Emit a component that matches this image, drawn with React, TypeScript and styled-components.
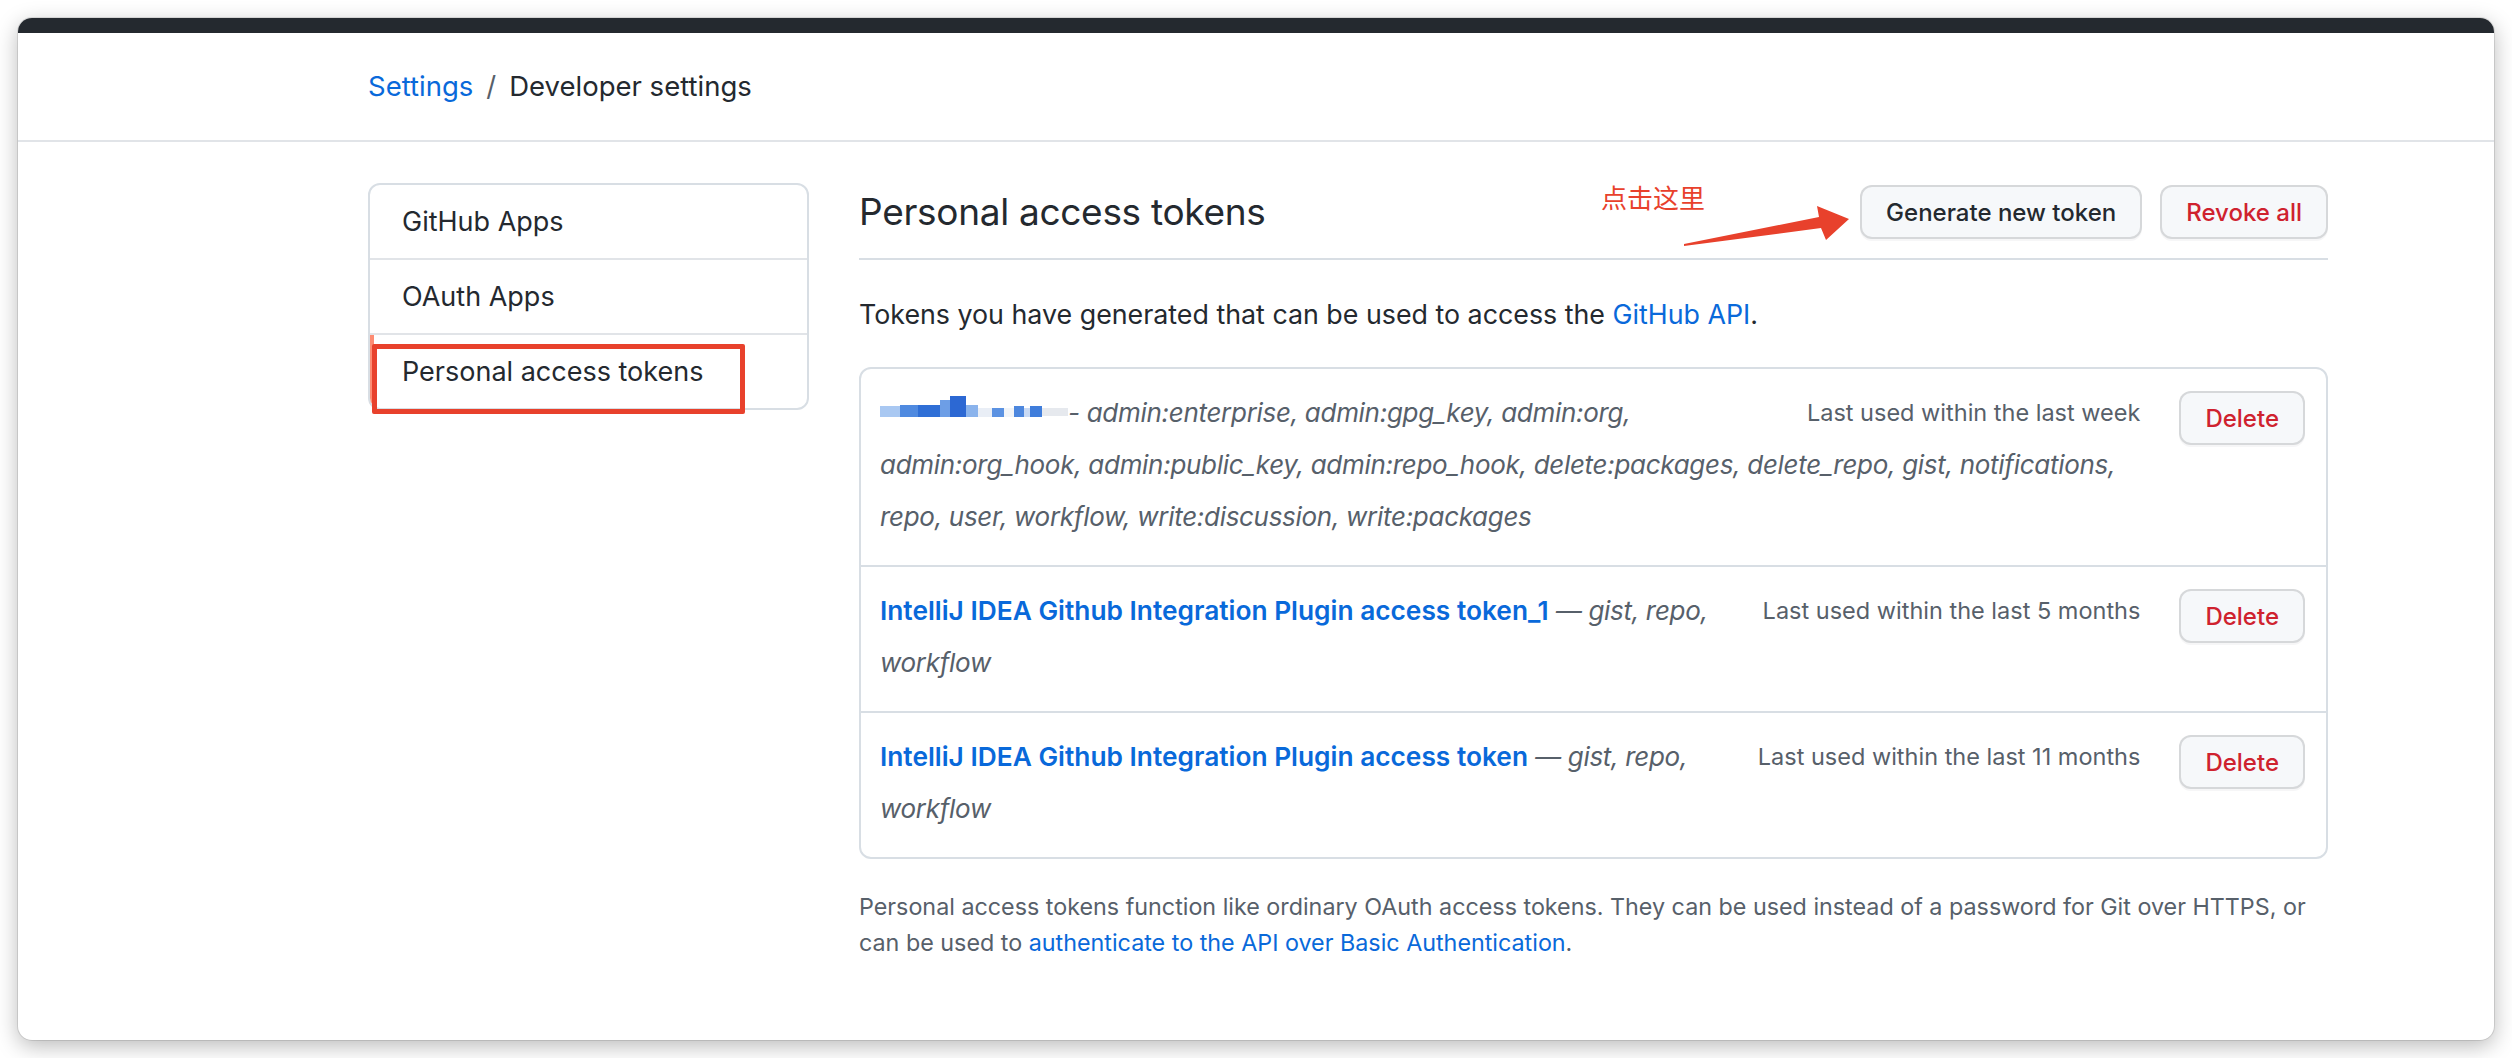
import React from 'react';
import styled, {createGlobalStyle, css} from 'styled-components';

const GlobalStyle = createGlobalStyle`
  html, body {
    margin: 0;
    padding: 0;
    background: #ffffff;
  }
  body {
    font-family: Inter, 'Noto Sans', 'Noto Sans CJK SC', sans-serif;
    color: #24292f;
    -webkit-font-smoothing: antialiased;
  }
  #root {
    width: 2512px;
    height: 1058px;
    overflow: hidden;
  }
`;

const Page = styled.div`
  box-sizing: border-box;
  width: 2512px;
  height: 1058px;
  padding: 18px;
`;

const Window = styled.div`
  position: relative;
  width: 2476px;
  height: 1022px;
  background: #ffffff;
  border-radius: 14px;
  overflow: hidden;
  box-shadow: 0 0 0 1px rgba(0, 0, 0, 0.1), 0 6px 22px rgba(0, 0, 0, 0.28);
`;

const TopBar = styled.div`
  height: 15px;
  background: #24292f;
`;

const PageHeader = styled.header`
  display: flex;
  align-items: center;
  height: 107px;
  padding-left: 350px;
  border-bottom: 2px solid #e1e4e8;
`;

const Breadcrumb = styled.nav`
  font-size: 27.5px;
  line-height: 1;
  color: #24292f;
`;

const Crumb = styled.a`
  color: #0969da;
  text-decoration: none;
`;

const Slash = styled.span`
  margin: 0 13px;
  color: #57606a;
`;

const Layout = styled.div`
  display: flex;
  gap: 50px;
  padding: 41px 0 0 350px;
`;

const SideMenu = styled.nav`
  box-sizing: border-box;
  width: 441px;
  align-self: flex-start;
  border: 2px solid #d8dee4;
  border-radius: 12px;
  overflow: hidden;
`;

const MenuItem = styled.a<{$active?: boolean}>`
  display: flex;
  align-items: center;
  height: 73px;
  padding-left: 32px;
  font-size: 27px;
  color: #24292f;
  text-decoration: none;
  & + & {
    border-top: 2px solid #e1e4e8;
  }
  ${(p) =>
    p.$active &&
    css`
      box-shadow: inset 4px 0 0 #fd8c73;
    `}
`;

const Main = styled.main`
  width: 1469px;
`;

const Subhead = styled.div`
  display: flex;
  align-items: center;
  padding: 2px 0 19px;
  border-bottom: 2px solid #d8dee4;
`;

const Title = styled.h2`
  flex: 1;
  margin: 0;
  font-size: 37px;
  font-weight: 400;
  line-height: 54px;
  letter-spacing: -0.3px;
`;

const Button = styled.button<{$danger?: boolean}>`
  box-sizing: border-box;
  height: 54px;
  padding: 0 24px;
  font-family: inherit;
  font-size: 24px;
  font-weight: 500;
  color: ${(p) => (p.$danger ? '#cf222e' : '#24292f')};
  background: #f6f8fa;
  border: 2px solid rgba(31, 35, 40, 0.15);
  border-radius: 12px;
  box-shadow: 0 2px 0 rgba(31, 35, 40, 0.04);
  & + & {
    margin-left: 18px;
  }
`;

const Intro = styled.p`
  margin: 33px 0 32px;
  font-size: 26.8px;
  line-height: 42px;
`;

const Link = styled.a`
  color: #0969da;
  text-decoration: none;
`;

const TokenBox = styled.div`
  border: 2px solid #d8dee4;
  border-radius: 12px;
`;

const TokenRow = styled.div`
  display: flow-root;
  padding: 18px 21px 22px 19px;
  font-size: 26px;
  line-height: 52px;
  & + & {
    border-top: 2px solid #d8dee4;
  }
`;

const DeleteButton = styled(Button)`
  float: right;
  margin-top: 4px;
`;

const LastUsed = styled.span`
  float: right;
  margin-right: 39px;
  font-size: 23.5px;
  line-height: 52px;
  color: #57606a;
`;

const TokenName = styled.a`
  font-size: 26.3px;
  font-weight: 600;
  color: #0969da;
  text-decoration: none;
`;

const Scopes = styled.span`
  font-style: italic;
  letter-spacing: -0.3px;
  color: #57606a;
`;

const Mosaic = styled.svg`
  vertical-align: 4px;
`;

const Note = styled.p`
  margin: 30px 0 0;
  font-size: 23.3px;
  line-height: 36px;
  color: #57606a;
  white-space: nowrap;
`;

const Highlight = styled.div`
  position: absolute;
  left: 354px;
  top: 326px;
  width: 373px;
  height: 70px;
  box-sizing: border-box;
  border: 5px solid #e8412c;
  border-radius: 2px;
`;

const AnnotationLabel = styled.span`
  position: absolute;
  left: 1583px;
  top: 166px;
  font-family: 'Noto Sans CJK SC', sans-serif;
  font-size: 26px;
  line-height: 1;
  color: #e8412c;
`;

const ArrowLayer = styled.svg`
  position: absolute;
  left: 0;
  top: 0;
  pointer-events: none;
`;

const mosaicBlocks: [number, number, number, number, string][] = [
  [0, 10, 20, 11, '#a9c8f2'],
  [20, 9, 18, 12, '#4f8ae0'],
  [38, 9, 22, 12, '#2f6fd6'],
  [60, 4, 10, 17, '#6d9ee6'],
  [70, 0, 16, 21, '#2c68d3'],
  [86, 9, 12, 12, '#8ab3ec'],
  [98, 12, 14, 9, '#e9eef6'],
  [112, 12, 12, 9, '#5b92e2'],
  [124, 12, 10, 9, '#f1f4f8'],
  [134, 10, 10, 11, '#4d87de'],
  [144, 12, 6, 9, '#c9daf4'],
  [150, 10, 12, 11, '#3f7ddb'],
  [162, 12, 26, 8, '#e6e9ee'],
];

const tokens = [
  {
    name: 'IntelliJ IDEA Github Integration Plugin access token_1',
    lastUsed: 'Last used within the last 5 months',
  },
  {
    name: 'IntelliJ IDEA Github Integration Plugin access token',
    lastUsed: 'Last used within the last 11 months',
  },
];

const App: React.FC = () => {
  return (
    <>
      <GlobalStyle />
      <Page>
        <Window>
          <TopBar />
          <PageHeader>
            <Breadcrumb>
              <Crumb href='#'>Settings</Crumb>
              <Slash>/</Slash>
              Developer settings
            </Breadcrumb>
          </PageHeader>

          <Layout>
            <SideMenu>
              <MenuItem href='#'>GitHub Apps</MenuItem>
              <MenuItem href='#'>OAuth Apps</MenuItem>
              <MenuItem href='#' $active>
                Personal access tokens
              </MenuItem>
            </SideMenu>

            <Main>
              <Subhead>
                <Title>Personal access tokens</Title>
                <Button>Generate new token</Button>
                <Button $danger>Revoke all</Button>
              </Subhead>

              <Intro>
                Tokens you have generated that can be used to access the{' '}
                <Link href='#'>GitHub API</Link>.
              </Intro>

              <TokenBox>
                <TokenRow>
                  <DeleteButton $danger>Delete</DeleteButton>
                  <LastUsed>Last used within the last week</LastUsed>
                  <Mosaic width='188' height='22' viewBox='0 0 188 22'>
                    {mosaicBlocks.map(([x, y, w, h, c], i) => (
                      <rect key={i} x={x} y={y} width={w} height={h} fill={c} />
                    ))}
                  </Mosaic>
                  <Scopes>
                    - admin:enterprise, admin:gpg_key, admin:org,
                    <br />
                    admin:org_hook, admin:public_key, admin:repo_hook,
                    delete:packages, delete_repo, gist, notifications,
                    <br />
                    repo, user, workflow, write:discussion, write:packages
                  </Scopes>
                </TokenRow>
                {tokens.map((t) => (
                  <TokenRow key={t.name}>
                    <DeleteButton $danger>Delete</DeleteButton>
                    <LastUsed>{t.lastUsed}</LastUsed>
                    <TokenName href='#'>{t.name}</TokenName>
                    <Scopes>
                      {' '}
                      — gist, repo,
                      <br />
                      workflow
                    </Scopes>
                  </TokenRow>
                ))}
              </TokenBox>

              <Note>
                Personal access tokens function like ordinary OAuth access
                tokens. They can be used instead of a password for Git over
                HTTPS, or
                <br />
                can be used to{' '}
                <Link href='#'>
                  authenticate to the API over Basic Authentication
                </Link>
                .
              </Note>
            </Main>
          </Layout>

          <Highlight />
          <AnnotationLabel>点击这里</AnnotationLabel>
          <ArrowLayer width='2476' height='1022' viewBox='0 0 2476 1022'>
            <polygon
              points='1666,226 1801,199 1799,188 1831,201 1808,222 1803,210 1666,228'
              fill='#e8412c'
            />
          </ArrowLayer>
        </Window>
      </Page>
    </>
  );
};

export default App;
